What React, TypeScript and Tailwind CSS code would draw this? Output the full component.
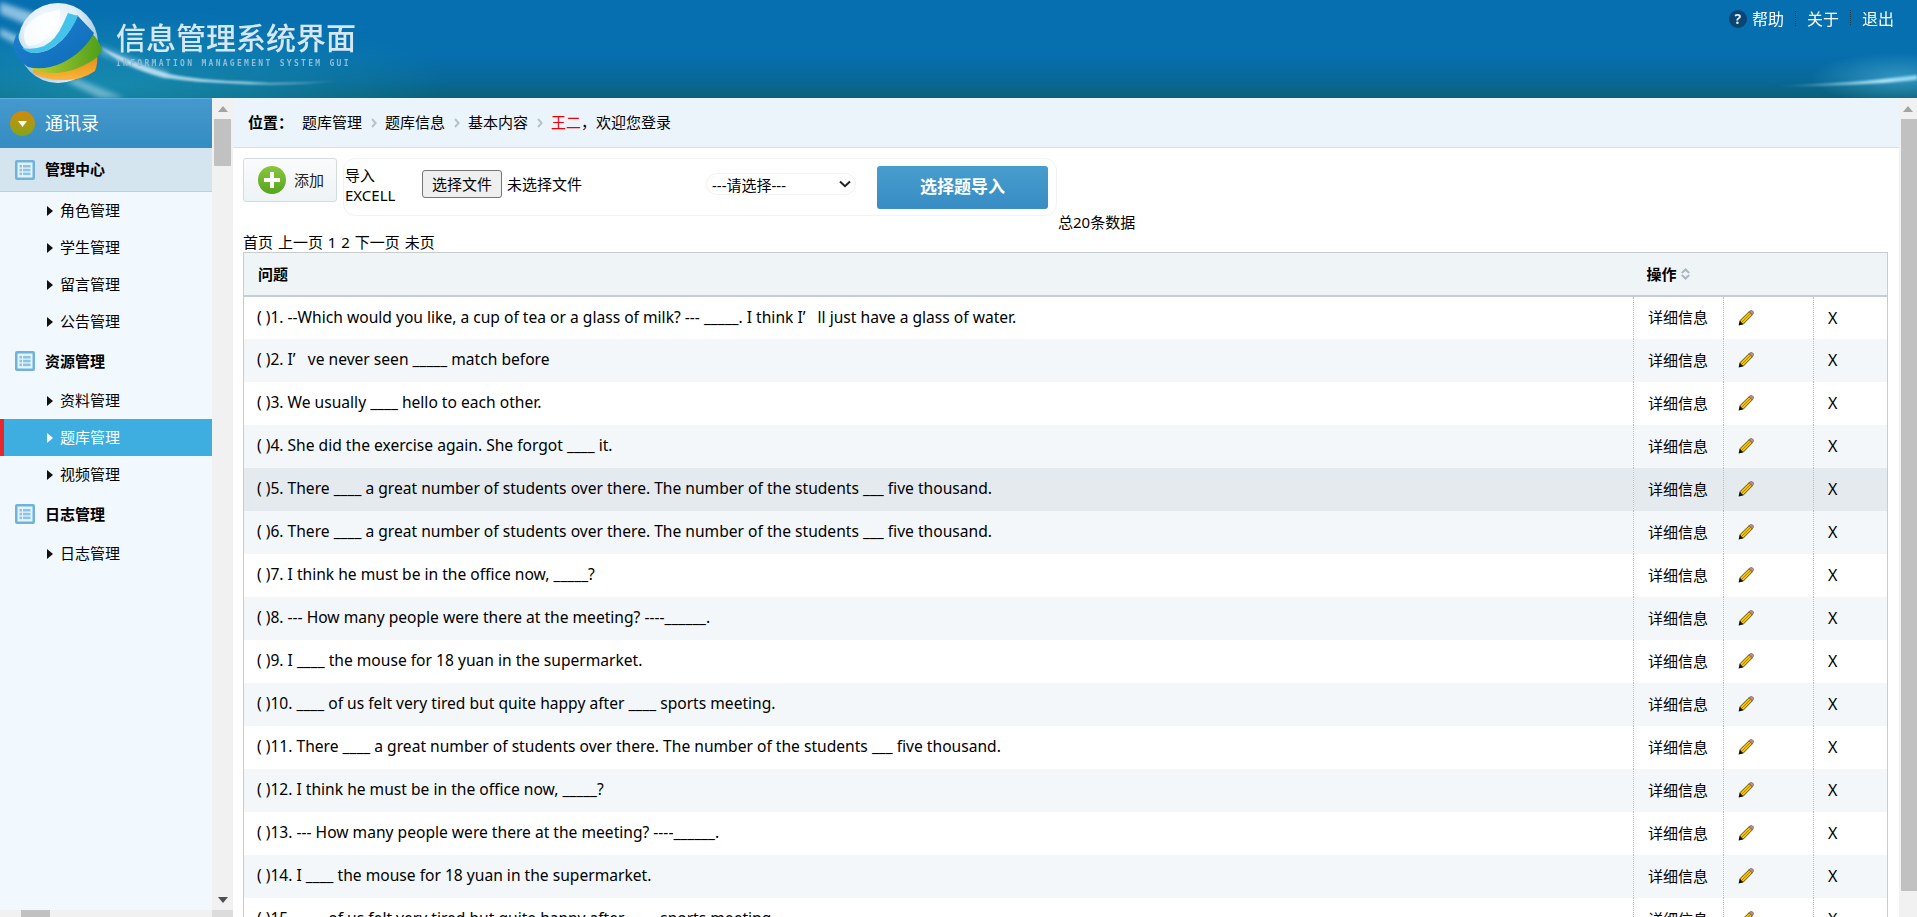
import React from "react";

const FONT = "[font-family:'Noto_Sans','Noto_Sans_CJK_SC',sans-serif]";

const rows = [
  "( )1. --Which would you like, a cup of tea or a glass of milk? --- _____. I think I’\u00a0\u00a0 ll just have a glass of water.",
  "( )2. I’\u00a0\u00a0 ve never seen _____ match before",
  "( )3. We usually ____ hello to each other.",
  "( )4. She did the exercise again. She forgot ____ it.",
  "( )5. There ____ a great number of students over there. The number of the students ___ five thousand.",
  "( )6. There ____ a great number of students over there. The number of the students ___ five thousand.",
  "( )7. I think he must be in the office now, _____?",
  "( )8. --- How many people were there at the meeting? ----______.",
  "( )9. I ____ the mouse for 18 yuan in the supermarket.",
  "( )10. ____ of us felt very tired but quite happy after ____ sports meeting.",
  "( )11. There ____ a great number of students over there. The number of the students ___ five thousand.",
  "( )12. I think he must be in the office now, _____?",
  "( )13. --- How many people were there at the meeting? ----______.",
  "( )14. I ____ the mouse for 18 yuan in the supermarket.",
  "( )15. ____ of us felt very tired but quite happy after ____ sports meeting.",
];

function ListIcon() {
  return (
    <svg width="20" height="20" viewBox="0 0 20 20" className="shrink-0">
      <rect x="0" y="0" width="20" height="20" rx="2" fill="#6fb3dc" />
      <rect x="2.5" y="2.5" width="15" height="15" fill="#e4f2fa" />
      <rect x="4.5" y="5" width="2.5" height="2.5" fill="#8cc3e4" />
      <rect x="8" y="5" width="7.5" height="2.5" fill="#8cc3e4" />
      <rect x="4.5" y="8.8" width="2.5" height="2.5" fill="#8cc3e4" />
      <rect x="8" y="8.8" width="7.5" height="2.5" fill="#8cc3e4" />
      <rect x="4.5" y="12.6" width="2.5" height="2.5" fill="#8cc3e4" />
      <rect x="8" y="12.6" width="7.5" height="2.5" fill="#8cc3e4" />
    </svg>
  );
}

function Pencil() {
  return (
    <svg width="16" height="16" viewBox="0 0 16 16" className="block">
      <path d="M1.8 10.8 L11.2 1.6 L14.4 4.8 L5.2 14.2 Z" fill="#f0c010" stroke="#3a3208" strokeWidth="0.8" />
      <path d="M0.6 15.4 L1.6 10.8 L5.2 14.4 Z" fill="#111" />
      <path d="M3.6 12.4 L12.8 3.2" stroke="#b88c08" strokeWidth="1" />
      <path d="M11 1.8 L12.6 0.4 Q13.4 -0.1 14.2 0.6 L15.4 1.8 Q16 2.6 15.4 3.4 L14.2 4.8 Z" fill="#b98a86" stroke="#5c4440" strokeWidth="0.5" />
    </svg>
  );
}

function Chevron() {
  return (
    <svg width="6" height="10" viewBox="0 0 6 10" className="shrink-0 ml-[9px] mr-[8px]">
      <path d="M1 1 L4.6 5 L1 9" fill="none" stroke="#b4c3cb" strokeWidth="2" />
    </svg>
  );
}

function MenuItem({ label, active }: { label: string; active?: boolean }) {
  return (
    <div
      className={
        "h-[37px] flex items-center text-[15px] " +
        (active ? "bg-[#3eaee1] text-white border-l-4 border-[#e8262c] pl-[43px]" : "text-black pl-[47px]")
      }
    >
      <svg width="6" height="10" viewBox="0 0 6 10" className="mr-[7px] shrink-0">
        <path d="M0 0 L6 5 L0 10 Z" fill={active ? "#fff" : "#111"} />
      </svg>
      {label}
    </div>
  );
}

function Section({ label, first }: { label: string; first?: boolean }) {
  return (
    <div
      className={
        "flex items-center pl-[15px] gap-[10px] text-[15px] font-bold text-black " +
        (first ? "h-[44px] bg-[#d4e5ef] border-b border-[#bccfdb]" : "h-[42px]")
      }
    >
      <ListIcon />
      {label}
    </div>
  );
}

function VScrollbar({ thumbClass, downArrow }: { thumbClass: string; downArrow?: boolean }) {
  return (
    <div className="bg-[#f1f1f1] h-full flex flex-col">
      <div className="h-[21px] flex items-center justify-center">
        <svg width="10" height="6" viewBox="0 0 10 6"><path d="M5 0 L10 6 L0 6 Z" fill="#a3a3a3" /></svg>
      </div>
      <div className={"bg-[#c1c1c1] " + thumbClass} />
      <div className="flex-1" />
      {downArrow && (
        <div className="h-[21px] flex items-center justify-center">
          <svg width="10" height="6" viewBox="0 0 10 6"><path d="M5 6 L10 0 L0 0 Z" fill="#505050" /></svg>
        </div>
      )}
    </div>
  );
}

function HeaderArt() {
  return (
    <svg className="absolute inset-0 w-full h-full" viewBox="0 0 1917 98" preserveAspectRatio="none">
      <defs>
        <linearGradient id="hb" x1="0" y1="0" x2="0" y2="1">
          <stop offset="0" stopColor="#066fb1" />
          <stop offset="0.55" stopColor="#066fae" />
          <stop offset="0.8" stopColor="#08699a" />
          <stop offset="1" stopColor="#0a6177" />
        </linearGradient>
        <radialGradient id="teal" cx="0.5" cy="0.5" r="0.5">
          <stop offset="0" stopColor="#1a92b4" stopOpacity="0.8" />
          <stop offset="1" stopColor="#1a92b4" stopOpacity="0" />
        </radialGradient>
        <linearGradient id="ray" x1="0" y1="0" x2="1" y2="0">
          <stop offset="0" stopColor="#fff" stopOpacity="0" />
          <stop offset="0.45" stopColor="#e8f6ff" stopOpacity="0.7" />
          <stop offset="1" stopColor="#fff" stopOpacity="0" />
        </linearGradient>
        <linearGradient id="flare" x1="0" y1="0" x2="1" y2="0">
          <stop offset="0" stopColor="#9fdcf5" stopOpacity="0" />
          <stop offset="0.8" stopColor="#e8f9ff" stopOpacity="1" />
          <stop offset="1" stopColor="#bfeeff" stopOpacity="0.9" />
        </linearGradient>
        <radialGradient id="flareGlow" cx="0.5" cy="0.5" r="0.5">
          <stop offset="0" stopColor="#5ec2e6" stopOpacity="0.5" />
          <stop offset="1" stopColor="#5ec2e6" stopOpacity="0" />
        </radialGradient>
        <filter id="bl"><feGaussianBlur stdDeviation="1" /></filter>
        <filter id="bl2"><feGaussianBlur stdDeviation="2.5" /></filter>
      </defs>
      <rect width="1917" height="98" fill="url(#hb)" />
      <ellipse cx="110" cy="85" rx="340" ry="75" fill="url(#teal)" />
      <g filter="url(#bl2)" fill="#cfeafa" opacity="0.65">
        <path d="M0 2 L60 22 L50 34 L0 14 Z" />
        <path d="M0 28 L40 46 L36 54 L0 36 Z" />
        <path d="M100 45 L170 72 L165 78 L100 55 Z" opacity="0.5" />
        <path d="M76 78 L125 98 L100 98 L66 82 Z" opacity="0.7" />
      </g>
      <g filter="url(#bl)">
        <path d="M100 47 Q140 66 170 74 Q210 82 270 82 Q210 85 165 78 Q125 68 100 47 Z" fill="#e2f4fd" opacity="0.7" />
        <path d="M170 78 Q260 87 345 80 Q270 90 170 78 Z" fill="url(#ray)" />
        <path d="M1770 86 Q1850 84 1917 75 L1917 80 Q1850 87 1770 86 Z" fill="url(#flare)" />
      </g>
      <ellipse cx="1900" cy="78" rx="90" ry="26" fill="url(#flareGlow)" />
    </svg>
  );
}

function Logo() {
  return (
    <svg width="110" height="85" viewBox="0 0 110 85" className="absolute left-0 top-0">
      <defs>
        <radialGradient id="sph" cx="0.42" cy="0.3" r="0.72">
          <stop offset="0" stopColor="#ffffff" />
          <stop offset="0.5" stopColor="#dfeef7" />
          <stop offset="0.85" stopColor="#9cc5de" />
          <stop offset="1" stopColor="#e5f1f8" />
        </radialGradient>
        <linearGradient id="grn" x1="0" y1="0" x2="1" y2="0">
          <stop offset="0" stopColor="#c0d430" />
          <stop offset="1" stopColor="#4b9e1c" />
        </linearGradient>
        <linearGradient id="org" x1="0" y1="0" x2="0" y2="1">
          <stop offset="0" stopColor="#e28a12" />
          <stop offset="1" stopColor="#fbb53a" />
        </linearGradient>
        <linearGradient id="blu" x1="0" y1="0" x2="1" y2="1">
          <stop offset="0" stopColor="#1d83cf" />
          <stop offset="1" stopColor="#0f6bb8" />
        </linearGradient>
      </defs>
      <circle cx="58" cy="43" r="40" fill="url(#sph)" />
      <path d="M25 28 Q36 12 60 10 Q62 18 54 30 Q42 46 28 46 Q22 40 25 28 Z" fill="#fff" opacity="0.75" />
      <path d="M33 70 Q60 70 97 54 Q98 64 95 71 Q82 80 66 80 Q46 81 33 73 Z" fill="url(#org)" />
      <path d="M28 67 Q60 66 80 48 Q88 42 92 33 Q100 42 102 50 Q98 58 90 62 Q74 72 56 73 Q38 73 28 67 Z" fill="url(#grn)" />
      <path d="M77 15 L94 33 Q84 52 62 63 Q44 71 28 67 Q16 60 13 47 Q14 38 18 32 Q18 48 32 53 Q48 54 62 40 Q72 30 77 15 Z" fill="url(#blu)" />
      <path d="M68 13 L78 16 Q72 30 62 40 Q48 54 32 53 Q26 52 22 48 Q34 50 44 46 Q56 40 63 24 Z" fill="#44c4ea" />
    </svg>
  );
}

export default function App() {
  return (
    <div className={"h-[917px] w-full overflow-hidden flex flex-col text-black bg-white " + FONT}>
      {/* header */}
      <header className="relative h-[98px] shrink-0 overflow-hidden">
        <HeaderArt />
        <Logo />
        <div className="relative flex h-full">
          <div className="ml-[116px] pt-[19px] text-[#d4e7f2]">
            <div className="text-[30px] leading-[38px] font-medium whitespace-nowrap">信息管理系统界面</div>
            <div className="text-[8px] leading-[10px] mt-[2px] tracking-[2.3px] font-bold text-[#8fbdd8] whitespace-nowrap [font-family:'DejaVu_Sans_Mono',monospace]">INFORMATION MANAGEMENT SYSTEM GUI</div>
          </div>
          <nav className="ml-auto mr-[23px] mt-[9px] flex items-start text-[16px] leading-[20px] text-white h-[20px]">
            <span className="flex h-[18px] w-[18px] mr-[5px] mt-[1px] items-center justify-center rounded-full bg-[#0a4673] text-[14px] font-bold text-[#e4e9ec]">?</span>
            <span>帮助</span>
            <span className="mx-[11px] h-[15px] mt-[2px] border-l border-dotted border-[#173b52]" />
            <span>关于</span>
            <span className="mx-[11px] h-[15px] mt-[1px] border-l border-dotted border-[#173b52]" />
            <span>退出</span>
          </nav>
        </div>
      </header>

      <div className="flex flex-1 min-h-0">
        {/* sidebar */}
        <aside className="w-[233px] shrink-0 flex flex-col min-h-0">
          <div className="flex flex-1 min-h-0">
            <div className="w-[212px] bg-[#f1f9ff] overflow-hidden">
              <div className="h-[50px] border-t border-[#5aaee0] bg-gradient-to-b from-[#4599cc] to-[#348cc2] flex items-center pl-[10px] gap-[10px]">
                <span className="flex h-[25px] w-[25px] items-center justify-center rounded-full bg-gradient-to-b from-[#d28708] to-[#7fa51a]">
                  <svg width="9" height="6" viewBox="0 0 9 6"><path d="M0 0 L9 0 L4.5 6 Z" fill="#fff" /></svg>
                </span>
                <span className="text-[18px] text-white">通讯录</span>
              </div>
              <Section label="管理中心" first />
              <MenuItem label="角色管理" />
              <MenuItem label="学生管理" />
              <MenuItem label="留言管理" />
              <MenuItem label="公告管理" />
              <Section label="资源管理" />
              <MenuItem label="资料管理" />
              <MenuItem label="题库管理" active />
              <MenuItem label="视频管理" />
              <Section label="日志管理" />
              <MenuItem label="日志管理" />
            </div>
            <div className="w-[21px]">
              <VScrollbar thumbClass="mx-[2px] h-[47px]" downArrow />
            </div>
          </div>
          <div className="h-[7px] shrink-0 flex bg-[#f1f1f1]">
            <div className="w-[212px] pl-[21px]"><div className="h-full w-[29px] bg-[#c1c1c1]" /></div>
            <div className="w-[21px] bg-[#dcdcdc]" />
          </div>
        </aside>

        {/* main */}
        <main className="flex-1 min-w-0 overflow-hidden text-[15px]">
          <div className="h-[50px] bg-[#ebf4fb] border-b border-[#d5e1e7] flex items-center pl-[15px]">
            <b className="mr-[9px]">位置：</b>
            <span>题库管理</span>
            <Chevron />
            <span>题库信息</span>
            <Chevron />
            <span>基本内容</span>
            <Chevron />
            <span className="text-[#f00000]">王二</span>
            <span>，欢迎您登录</span>
          </div>

          <div className="pl-[10px] pr-[11px]">
            <div className="flex items-start mt-[10px]">
              <button className="w-[94px] h-[44px] border border-[#d3dbde] rounded-[3px] bg-gradient-to-b from-[#fafbfc] to-[#eef3f5] flex items-center pl-[14px] gap-[8px] text-[15px] text-[#222]">
                <span className="flex h-[28px] w-[28px] items-center justify-center rounded-full bg-gradient-to-b from-[#8cc63f] to-[#55a51c]">
                  <svg width="16" height="16" viewBox="0 0 16 16"><path d="M6 0 H10 V6 H16 V10 H10 V16 H6 V10 H0 V6 H6 Z" fill="#fff" /></svg>
                </span>
                添加
              </button>
              <div className="ml-[6px] w-[714px] h-[58px] border border-[#f2f2f2] rounded-[12px] flex items-center">
                <div className="w-[78px] pl-[1px] text-[15px] leading-[20px] mb-[4px]">导入<br />EXCELL</div>
                <span className="h-[28px] w-[80px] mb-[6px] flex items-center justify-center rounded-[3px] border border-[#767676] bg-[#efefef] text-[15px]">选择文件</span>
                <span className="ml-[5px] w-[199px] mb-[6px]">未选择文件</span>
                <div className="relative w-[150px] h-[22px] mb-[6px]">
                  <select className="appearance-none w-full h-full pl-[5px] rounded-[11px] border border-[#f2f2f2] bg-white text-[15px] outline-none">
                    <option>---请选择---</option>
                  </select>
                  <svg width="12" height="8" viewBox="0 0 12 8" className="absolute right-[5px] top-[7px] pointer-events-none">
                    <path d="M1 1.5 L6 6.2 L11 1.5" fill="none" stroke="#222" strokeWidth="2" />
                  </svg>
                </div>
                <span className="ml-[21px] w-[171px] h-[43px] rounded-[3px] bg-gradient-to-b from-[#479dcc] to-[#378dc4] text-white font-bold text-[17px] flex items-center justify-center">选择题导入</span>
              </div>
            </div>
            <div className="h-[20px] leading-[20px] -mt-[4px] pl-[815px] whitespace-nowrap">总20条数据</div>
            <div className="h-[20px] leading-[20px] whitespace-nowrap [word-spacing:1px]">首页 上一页 1 2 下一页 未页</div>

            <table className="w-[1645px] table-fixed border-collapse border-x border-t border-[#c9cccd]">
              <colgroup>
                <col className="w-[1390px]" />
                <col className="w-[90px]" />
                <col className="w-[90px]" />
                <col />
              </colgroup>
              <thead>
                <tr className="h-[43px] bg-[#eff4f7] border-b-2 border-[#c4ced3] font-bold">
                  <th className="text-left font-bold pl-[14px]">问题</th>
                  <th colSpan={3} className="text-left font-bold pl-[13px]">
                    <span className="inline-flex items-center gap-[4px]">
                      操作
                      <svg width="9" height="12" viewBox="0 0 9 12">
                        <path d="M4.5 0 L9 4.5 L7.5 5.5 L4.5 3 L1.5 5.5 L0 4.5 Z M4.5 12 L9 7.5 L7.5 6.5 L4.5 9 L1.5 6.5 L0 7.5 Z" fill="#aab7bf" />
                      </svg>
                    </span>
                  </th>
                </tr>
              </thead>
              <tbody>
                {rows.map((text, i) => (
                  <tr
                    key={i}
                    className={"h-[43px] " + (i === 4 ? "bg-[#e5eaee]" : i % 2 === 1 ? "bg-[#f3f7fa]" : "bg-white")}
                  >
                    <td className="pl-[13px] text-[15.6px] whitespace-nowrap overflow-hidden">{text}</td>
                    <td className="pl-[14px] border-l border-dotted border-[#bcbcbc] whitespace-nowrap">详细信息</td>
                    <td className="pl-[14px] border-l border-dotted border-[#bcbcbc]"><Pencil /></td>
                    <td className="pl-[14px] text-[16px] border-l border-dotted border-[#bcbcbc]">X</td>
                  </tr>
                ))}
              </tbody>
            </table>
          </div>
        </main>

        {/* page scrollbar */}
        <div className="w-[18px] shrink-0">
          <VScrollbar thumbClass="ml-[2px] h-[772px]" />
        </div>
      </div>
    </div>
  );
}
